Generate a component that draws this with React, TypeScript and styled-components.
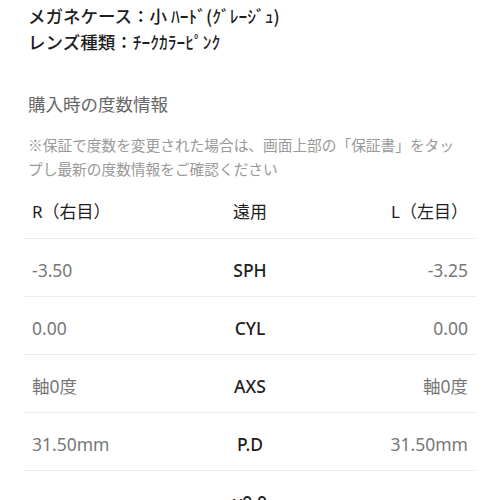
import React from "react";
import styled, { createGlobalStyle } from "styled-components";

const Global = createGlobalStyle`
  html, body { margin: 0; padding: 0; background: #fff; }
  body { font-family: "Noto Sans", "Noto Sans CJK JP", sans-serif; overflow: hidden; }
`;

const Page = styled.div`
  width: 500px;
  height: 500px;
  overflow: hidden;
  background: #fff;
`;

const Spec = styled.div`
  padding: 3px 28px 0;
  font-family: "Noto Sans CJK JP", sans-serif;
  font-size: 17.5px;
  line-height: 26px;
  font-weight: 500;
  color: #1e1e1e;
`;

const SpecLine = styled.div`
  white-space: nowrap;
`;

const Section = styled.div`
  padding: 0 28px;
  font-family: "Noto Sans CJK JP", sans-serif;
`;

const Title = styled.div`
  margin-top: 36px;
  font-size: 17.5px;
  line-height: 26px;
  color: #666;
`;

const Note = styled.div`
  margin-top: 16px;
  font-size: 14.7px;
  line-height: 24px;
  color: #999;
  white-space: nowrap;
`;

const Table = styled.div`
  margin: 2px 24px 0;
`;

const Row = styled.div<{ $header?: boolean }>`
  display: grid;
  grid-template-columns: 1fr 1fr 1fr;
  align-items: center;
  height: ${(p) => (p.$header ? "56px" : "58px")};
  padding: 0 8px;
  padding-top: ${(p) => (p.$header ? "0" : "4px")};
  border-bottom: 1px solid #ececec;
  font-size: 17.5px;
  box-sizing: border-box;
`;

const Cell = styled.div<{ $align: "left" | "center" | "right"; $tone: "head" | "value" | "label" }>`
  text-align: ${(p) => p.$align};
  color: ${(p) => (p.$tone === "value" ? "#777" : "#1e1e1e")};
  font-weight: ${(p) => (p.$tone === "label" ? 500 : 400)};
  font-size: ${(p) => (p.$tone === "head" ? "17px" : "17.5px")};
  font-family: "Noto Sans", "Noto Sans CJK JP", sans-serif;
  white-space: nowrap;
`;

const rows = [
  { r: "-3.50", label: "SPH", l: "-3.25" },
  { r: "0.00", label: "CYL", l: "0.00" },
  { r: "軸0度", label: "AXS", l: "軸0度" },
  { r: "31.50mm", label: "P.D", l: "31.50mm" },
  { r: "", label: "v0.0", l: "" },
];

export default function App() {
  return (
    <Page>
      <Global />
      <Spec>
        <SpecLine>メガネケース：小 ﾊｰﾄﾞ(ｸﾞﾚｰｼﾞｭ)</SpecLine>
        <SpecLine>レンズ種類：ﾁｰｸｶﾗｰﾋﾟﾝｸ</SpecLine>
      </Spec>
      <Section>
        <Title>購入時の度数情報</Title>
        <Note>
          ※保証で度数を変更された場合は、画面上部の「保証書」をタッ
          <br />
          プし最新の度数情報をご確認ください
        </Note>
      </Section>
      <Table>
        <Row $header>
          <Cell $align="left" $tone="head">R（右目）</Cell>
          <Cell $align="center" $tone="head">遠用</Cell>
          <Cell $align="right" $tone="head">L（左目）</Cell>
        </Row>
        {rows.map((row) => (
          <Row key={row.label}>
            <Cell $align="left" $tone="value">{row.r}</Cell>
            <Cell $align="center" $tone="label">{row.label}</Cell>
            <Cell $align="right" $tone="value">{row.l}</Cell>
          </Row>
        ))}
      </Table>
    </Page>
  );
}
